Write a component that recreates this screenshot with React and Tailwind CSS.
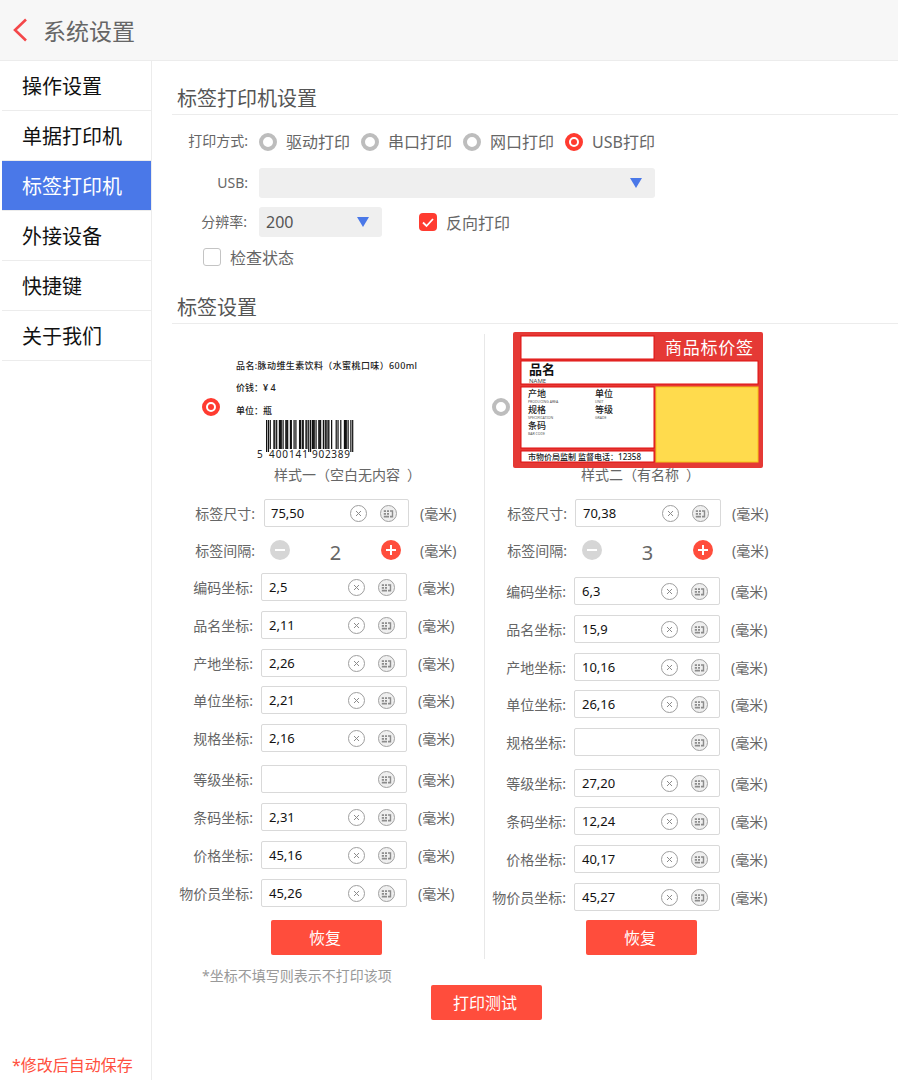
import React from "react";

const font = "'Noto Sans','Noto Sans CJK SC',sans-serif";

function ean(code) {
  const L = ["0001101","0011001","0010011","0111101","0100011","0110001","0101111","0111011","0110111","0001011"];
  const R = L.map((s) => s.split("").map((c) => (c === "0" ? "1" : "0")).join(""));
  const G = R.map((s) => s.split("").reverse().join(""));
  const parity = ["LLLLLL","LLGLGG","LLGGLG","LLGGGL","LGLLGG","LGGLLG","LGGGLL","LGLGLG","LGLGGL","LGGLGL"][+code[0]];
  let out = "101";
  for (let i = 1; i <= 6; i++) out += (parity[i - 1] === "L" ? L : G)[+code[i]];
  out += "01010";
  for (let i = 7; i <= 12; i++) out += R[+code[i]];
  return out + "101";
}

function Radio({ on, className = "" }) {
  return on ? (
    <span className={"flex h-[18px] w-[18px] shrink-0 items-center justify-center rounded-full border-[4px] border-[#ff3b30] bg-white " + className}>
      <span className="h-[6px] w-[6px] rounded-full bg-[#ff3b30]" />
    </span>
  ) : (
    <span className={"block h-[18px] w-[18px] shrink-0 rounded-full border-[4px] border-[#bdbdbd] bg-white " + className} />
  );
}

function Tri({ className = "" }) {
  return (
    <svg viewBox="0 0 12 10" className={"h-[10px] w-[12px] " + className}>
      <path d="M0 0H12L6 10Z" fill="#4a78e8" />
    </svg>
  );
}

function ClearIcon() {
  return (
    <svg viewBox="0 0 17 17" className="h-[17px] w-[17px] shrink-0">
      <circle cx="8.5" cy="8.5" r="8" fill="none" stroke="#9e9e9e" strokeWidth="1" />
      <path d="M6 6L11 11M11 6L6 11" stroke="#8c8c8c" strokeWidth="1" />
    </svg>
  );
}

function KeyIcon() {
  return (
    <svg viewBox="0 0 17 17" className="h-[17px] w-[17px] shrink-0">
      <circle cx="8.5" cy="8.5" r="8" fill="#efefef" stroke="#a0a0a0" strokeWidth="1" />
      <path
        d="M3.8 5.2H6V7H3.8ZM7 5.2H9V7H7ZM3.8 8H6V9.8H3.8ZM7 8H9V9.8H7ZM3.8 10.8H9V12.4H3.8ZM10 5.2H13.2V12.4H10V10.8H11.8V6.8H10Z"
        fill="#8c8c8c"
      />
    </svg>
  );
}

function Field({ label, value, mt, wrap = "", inputBox = "ml-[8px] w-[146px] pl-[7px]" }) {
  return (
    <div className={"flex h-[28px] items-center " + mt + " " + wrap}>
      <span className="w-[81px] whitespace-nowrap text-right text-[14px] text-[#666]">{label}</span>
      <div className={"flex h-[28px] items-center rounded-[2px] border border-[#d9d9d9] bg-white pr-[11px] " + inputBox}>
        <span className="flex-1 pt-[2px] text-[13px] text-[#111]">{value}</span>
        {value ? <ClearIcon /> : null}
        <span className="ml-[13px]">
          <KeyIcon />
        </span>
      </div>
      <span className="ml-[11px] whitespace-nowrap text-[14px] text-[#666]">(毫米)</span>
    </div>
  );
}

function Stepper({ value, mt, wrap }) {
  return (
    <div className={"flex h-[28px] items-center " + mt + " " + wrap}>
      <span className="w-[81px] whitespace-nowrap text-right text-[14px] text-[#666]">标签间隔:</span>
      <div className="ml-[15px] flex w-[131px] items-center justify-between">
        <span className="relative h-[20px] w-[20px] rounded-full bg-[#d6d6d6]">
          <span className="absolute left-[5px] top-[9px] h-[2px] w-[10px] bg-white" />
        </span>
        <span className="pt-[6px] text-[20px] leading-[24px] text-[#666]">{value}</span>
        <span className="relative h-[20px] w-[20px] rounded-full bg-[#ff4d3c]">
          <span className="absolute left-[5px] top-[9px] h-[2px] w-[10px] bg-white" />
          <span className="absolute left-[9px] top-[5px] h-[10px] w-[2px] bg-white" />
        </span>
      </div>
      <span className="ml-[19px] whitespace-nowrap text-[14px] text-[#666]">(毫米)</span>
    </div>
  );
}

function RedButton({ children, className = "" }) {
  return (
    <button className={"block h-[35px] w-[111px] rounded-[2px] bg-[#ff4d3c] pr-[3px] text-[16px] text-white " + className}>{children}</button>
  );
}

function LabelOne() {
  const bars = ean("5400141902389");
  const m = 87 / 95;
  return (
    <svg viewBox="0 0 184 110" className="mt-[20px] h-[110px] w-[184px] shrink-0" style={{ fontFamily: font }}>
      <text x="0" y="14.5" fontSize="9" fontWeight="500" fill="#222" textLength="181">品名:脉动维生素饮料（水蜜桃口味）600ml</text>
      <text x="0" y="36.5" fontSize="9" fontWeight="500" fill="#222">价钱：¥ 4</text>
      <text x="0" y="59.5" fontSize="9" fontWeight="500" fill="#222">单位：瓶</text>
      {bars.split("").map((b, i) =>
        b === "1" ? (
          <rect key={i} x={30 + i * m} y="66" width={m + 0.3} height={i < 3 || (i > 44 && i < 50) || i > 91 ? 32 : 29} fill="#111" />
        ) : null
      )}
      <text x="21" y="104" fontSize="10" fill="#222">5</text>
      <text x="33" y="104" fontSize="10" fill="#222" textLength="39">400141</text>
      <text x="76" y="104" fontSize="10" fill="#222" textLength="38">902389</text>
    </svg>
  );
}

function LabelTwo() {
  const red = "#e00f0f";
  const t = (x, y, s, txt, extra = {}) => (
    <text x={x} y={y} fontSize={s} fill="#222" {...extra}>{txt}</text>
  );
  return (
    <svg viewBox="0 0 250 136" className="ml-[3px] mt-[-2px] h-[136px] w-[250px] shrink-0" style={{ fontFamily: font }}>
      <rect x="0" y="0" width="250" height="136" rx="2" fill="#e53935" />
      <rect x="8" y="4" width="133" height="23" fill="#fff" stroke={red} strokeWidth="1" />
      <text x="152" y="22" fontSize="17" fill="#fff" textLength="88">商品标价签</text>
      <rect x="8" y="29" width="237" height="23" fill="#fff" stroke={red} strokeWidth="1" />
      <text x="16" y="42" fontSize="13" fontWeight="700" fill="#111">品名</text>
      <text x="16" y="51" fontSize="6" fill="#444">NAME</text>
      <rect x="8" y="55" width="133" height="61" fill="#fff" stroke={red} strokeWidth="1" />
      <rect x="143" y="55" width="102" height="75" fill="#ffdb4d" stroke="#f5c518" strokeWidth="1" />
      <rect x="8" y="119" width="133" height="11" fill="#fff" stroke={red} strokeWidth="1" />
      {t(15, 65, 9, "产地", { fontWeight: 500 })}
      {t(15, 70.5, 3.5, "PRODUCING AREA", { fill: "#555" })}
      {t(82, 65, 9, "单位", { fontWeight: 500 })}
      {t(82, 70.5, 3.5, "UNIT", { fill: "#555" })}
      {t(15, 81, 9, "规格", { fontWeight: 500 })}
      {t(15, 86.5, 3.5, "SPECIFICATION", { fill: "#555" })}
      {t(82, 81, 9, "等级", { fontWeight: 500 })}
      {t(82, 86.5, 3.5, "GRADE", { fill: "#555" })}
      {t(15, 97, 9, "条码", { fontWeight: 500 })}
      {t(15, 102.5, 3.5, "BAR CODE", { fill: "#555" })}
      <text x="15" y="127.5" fontSize="8" fontWeight="500" fill="#222">市物价局监制 监督电话：12358</text>
    </svg>
  );
}

const left = [
  ["编码坐标:", "2,5", "mt-[9px]"],
  ["品名坐标:", "2,11", "mt-[10px]"],
  ["产地坐标:", "2,26", "mt-[10px]"],
  ["单位坐标:", "2,21", "mt-[9px]"],
  ["规格坐标:", "2,16", "mt-[10px]"],
  ["等级坐标:", "", "mt-[13px]"],
  ["条码坐标:", "2,31", "mt-[10px]"],
  ["价格坐标:", "45,16", "mt-[10px]"],
  ["物价员坐标:", "45,26", "mt-[10px]"],
];

const right = [
  ["编码坐标:", "6,3", "mt-[13px]"],
  ["品名坐标:", "15,9", "mt-[10px]"],
  ["产地坐标:", "10,16", "mt-[10px]"],
  ["单位坐标:", "26,16", "mt-[9px]"],
  ["规格坐标:", "", "mt-[10px]"],
  ["等级坐标:", "27,20", "mt-[13px]"],
  ["条码坐标:", "12,24", "mt-[10px]"],
  ["价格坐标:", "40,17", "mt-[10px]"],
  ["物价员坐标:", "45,27", "mt-[10px]"],
];

const menu = ["操作设置", "单据打印机", "标签打印机", "外接设备", "快捷键", "关于我们"];

export default function App() {
  return (
    <div className="flex h-[1080px] w-full flex-col overflow-hidden bg-white" style={{ fontFamily: font }}>
      <header className="flex h-[61px] shrink-0 items-center border-b border-[#ececec] bg-[#f7f7f7] pl-[13px]">
        <svg viewBox="0 0 14 24" className="h-[24px] w-[14px]">
          <path d="M13 1.5L2 12L13 22.5" fill="none" stroke="#f4474a" strokeWidth="2.6" />
        </svg>
        <span className="ml-[16px] pt-[1px] text-[23px] leading-[30px] text-[#666]">系统设置</span>
      </header>
      <div className="flex flex-1">
        <aside className="ml-[2px] flex w-[150px] shrink-0 flex-col border-r border-[#ececec] bg-white">
          {menu.map((m, i) => (
            <div
              key={m}
              className={
                i === 2
                  ? "flex h-[50px] items-center border-b border-[#ececec] bg-[#4a78e8] pl-[20px] pt-[2px] text-[20px] text-white"
                  : "flex h-[50px] items-center border-b border-[#ececec] pl-[20px] pt-[2px] text-[20px] text-[#111]"
              }
            >
              {m}
            </div>
          ))}
          <div className="mt-auto pb-[4px] pl-[10px] text-[16px] leading-[22px] text-[#ff5040]">*修改后自动保存</div>
        </aside>
        <main className="flex-1 pl-[20px]">
          <div className="mt-[24px] border-b border-[#ececec] pb-[1px] pl-[5px] text-[20px] leading-[28px] text-[#555]">标签打印机设置</div>

          <div className="mt-[13px] flex h-[28px] items-center">
            <span className="w-[76px] whitespace-nowrap pb-[4px] text-right text-[14px] text-[#666]">打印方式:</span>
            <div className="ml-[11px] flex items-center gap-[11px]">
              {[["驱动打印", false], ["串口打印", false], ["网口打印", false], ["USB打印", true]].map(([t, on]) => (
                <div key={t} className="flex w-[91px] items-center gap-[9px]">
                  <Radio on={on} />
                  <span className="whitespace-nowrap text-[16px] text-[#666]">{t}</span>
                </div>
              ))}
            </div>
          </div>

          <div className="mt-[12px] flex h-[30px] items-center">
            <span className="w-[76px] pb-[2px] text-right text-[14px] text-[#666]">USB:</span>
            <div className="ml-[11px] flex h-[30px] w-[396px] items-center justify-end rounded-[3px] bg-[#efefef] pr-[13px]">
              <Tri />
            </div>
          </div>

          <div className="mt-[9px] flex h-[30px] items-center">
            <span className="w-[75px] pb-[2px] text-right text-[14px] text-[#666]">分辨率:</span>
            <div className="ml-[12px] flex h-[30px] w-[123px] items-center justify-between rounded-[3px] bg-[#efefef] pl-[7px] pr-[13px]">
              <span className="text-[16px] text-[#555]">200</span>
              <Tri />
            </div>
            <span className="ml-[37px] flex h-[18px] w-[18px] items-center justify-center rounded-[4px] bg-[#ff3b30]">
              <svg viewBox="0 0 18 18" className="h-[18px] w-[18px]">
                <path d="M4 9.5L7.5 13L14 6" fill="none" stroke="#fff" strokeWidth="1.8" />
              </svg>
            </span>
            <span className="ml-[9px] pt-[2px] text-[16px] text-[#666]">反向打印</span>
          </div>

          <div className="ml-[31px] mt-[11px] flex h-[18px] items-center">
            <span className="h-[18px] w-[18px] rounded-[3px] border border-[#c4c4c4] bg-white" />
            <span className="ml-[9px] pt-[2px] text-[16px] text-[#666]">检查状态</span>
          </div>

          <div className="mt-[28px] border-b border-[#ececec] pb-[1px] pl-[5px] text-[20px] leading-[28px] text-[#555]">标签设置</div>

          <div className="mt-[10px] flex h-[625px]">
            <section className="w-[313px] shrink-0 border-r border-[#e8e8e8]">
              <div className="flex h-[131px] items-start pl-[30px]">
                <Radio on className="mt-[64px]" />
                <div className="ml-[16px]">
                  <LabelOne />
                </div>
              </div>
              <div className="ml-[102px] h-[20px] whitespace-nowrap text-[14px] leading-[20px] text-[#666]">样式一（空白无内容&ensp;）</div>
              <Field label="标签尺寸:" value="75,50" mt="mt-[14px]" wrap="pl-[2px]" inputBox="ml-[9px] w-[145px] pl-[6px]" />
              <Stepper value="2" mt="mt-[9px]" wrap="pl-[2px]" />
              {left.map(([l, v, mt]) => (
                <Field key={l} label={l} value={v} mt={mt} />
              ))}
              <RedButton className="ml-[99px] mt-[13px]">恢复</RedButton>
            </section>
            <section className="flex-1">
              <div className="flex h-[131px] items-start pl-[7px]">
                <Radio className="mt-[64px]" />
                <LabelTwo />
              </div>
              <div className="ml-[96px] h-[20px] whitespace-nowrap text-[14px] leading-[20px] text-[#666]">样式二（有名称&ensp;）</div>
              <Field label="标签尺寸:" value="70,38" mt="mt-[14px]" wrap="pl-[1px]" />
              <Stepper value="3" mt="mt-[9px]" wrap="pl-[1px]" />
              {right.map(([l, v, mt]) => (
                <Field key={l} label={l} value={v} mt={mt} />
              ))}
              <RedButton className="ml-[101px] mt-[9px]">恢复</RedButton>
            </section>
          </div>

          <div className="ml-[30px] mt-[7px] h-[19px] whitespace-nowrap text-[14px] leading-[19px] text-[#999]">*坐标不填写则表示不打印该项</div>
          <RedButton className="ml-[259px]">打印测试</RedButton>
        </main>
      </div>
    </div>
  );
}
